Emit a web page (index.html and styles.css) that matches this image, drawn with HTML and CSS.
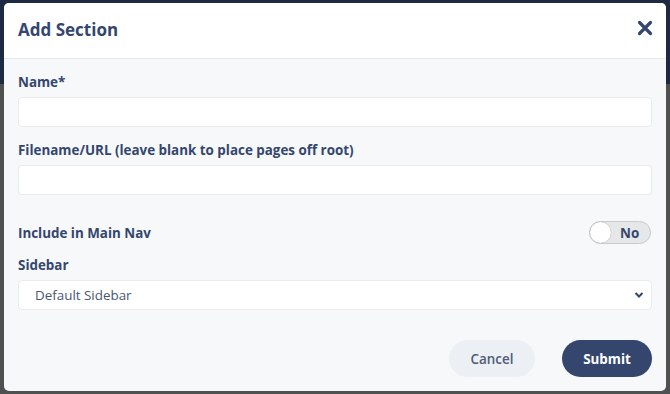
FILE: index.html
```html
<!DOCTYPE html>
<html lang="en">
<head>
    <meta charset="UTF-8">
    <title>Add Section</title>
    <link rel="stylesheet" href="styles.css">
</head>
<body>
    <div class="backdrop">
        <div class="modal">
            <div class="modal-header">
                <h2>Add Section</h2>
                <button class="close-button" type="button">
                    <svg width="16" height="16" viewBox="0 0 16 16">
                        <path d="M2.5 2.5 L13.5 13.5 M13.5 2.5 L2.5 13.5" stroke="#34466e" stroke-width="3.2" stroke-linecap="round"/>
                    </svg>
                </button>
            </div>
            <form class="modal-body">
                <div class="field">
                    <label for="name">Name*</label>
                    <input type="text" id="name">
                </div>
                <div class="field">
                    <label for="filename">Filename/URL (leave blank to place pages off root)</label>
                    <input type="text" id="filename">
                </div>
                <div class="toggle-row">
                    <span class="label">Include in Main Nav</span>
                    <div class="toggle">
                        <span class="knob"></span>
                        <span class="toggle-text">No</span>
                    </div>
                </div>
                <div class="field">
                    <label for="sidebar">Sidebar</label>
                    <div class="select">
                        <span>Default Sidebar</span>
                        <svg width="10" height="8" viewBox="0 0 10 8">
                            <path d="M1.5 2 L5 5.5 L8.5 2" fill="none" stroke="#34466e" stroke-width="2"/>
                        </svg>
                    </div>
                </div>
                <div class="actions">
                    <button type="button" class="cancel-button">Cancel</button>
                    <button type="button" class="submit-button">Submit</button>
                </div>
            </form>
        </div>
    </div>
</body>
</html>
```

FILE: styles.css
```css
body {
    margin: 0;
    padding: 0;
    font-family: "Open Sans", sans-serif;
    background: linear-gradient(#1e2a44 0, #1e2a44 84px, #4f5050 84px);
    height: 394px;
    overflow: hidden;
}

.backdrop {
    padding: 3px 4px 3px 4px;
}

.modal {
    background: #f6f8fa;
    border-radius: 5px;
    height: 388px;
    overflow: hidden;
    display: flex;
    flex-direction: column;
}

.modal-header {
    background: white;
    height: 55px;
    border-bottom: 1px solid #e6e9ee;
    display: flex;
    align-items: center;
    justify-content: space-between;
    padding: 0 13px 0 14px;
}

.modal-header h2 {
    margin: -3px 0 0 0;
    font-size: 17px;
    font-weight: 700;
    color: #34466e;
}

.close-button {
    background: none;
    border: none;
    padding: 0;
    display: flex;
    margin-top: -6px;
}

.modal-body {
    padding: 14px 14px 0 14px;
    display: flex;
    flex-direction: column;
}

.field label,
.toggle-row .label {
    display: block;
    font-size: 13.4px;
    font-weight: 700;
    color: #34466e;
    line-height: 18px;
}

.field label {
    margin-bottom: 6px;
}

.field input,
.select {
    box-sizing: border-box;
    width: 100%;
    height: 30px;
    border: 1px solid #e8ebef;
    border-radius: 4px;
    background: white;
    outline: none;
}

.field {
    margin-bottom: 14px;
}

.toggle-row {
    display: flex;
    align-items: center;
    justify-content: space-between;
    margin-top: 12px;
    margin-bottom: 12px;
}

.toggle {
    width: 62px;
    height: 23px;
    box-sizing: border-box;
    border-radius: 12px;
    background: #e6e7e9;
    border: 1px solid #c9cbcf;
    display: flex;
    align-items: center;
    margin-right: 1px;
}

.knob {
    width: 21px;
    height: 21px;
    border-radius: 50%;
    background: white;
    box-shadow: 0 0 1px rgba(0, 0, 0, 0.4);
}

.toggle-text {
    font-size: 13.4px;
    font-weight: 700;
    color: #34466e;
    margin-left: 9px;
}

.select {
    display: flex;
    align-items: center;
    justify-content: space-between;
    padding: 0 7px 0 16px;
    font-size: 13.4px;
    color: #4a5573;
}

.actions {
    display: flex;
    justify-content: flex-end;
    gap: 27px;
    margin-top: 16px;
}

.actions button {
    height: 37px;
    border: none;
    border-radius: 19px;
    font-family: "Open Sans", sans-serif;
    font-size: 13.4px;
    font-weight: 700;
    cursor: pointer;
}

.cancel-button {
    width: 86px;
    background: #eceff3;
    color: #4f5b78;
    font-weight: 600 !important;
}

.submit-button {
    width: 90px;
    background: #34466e;
    color: white;
}
```
